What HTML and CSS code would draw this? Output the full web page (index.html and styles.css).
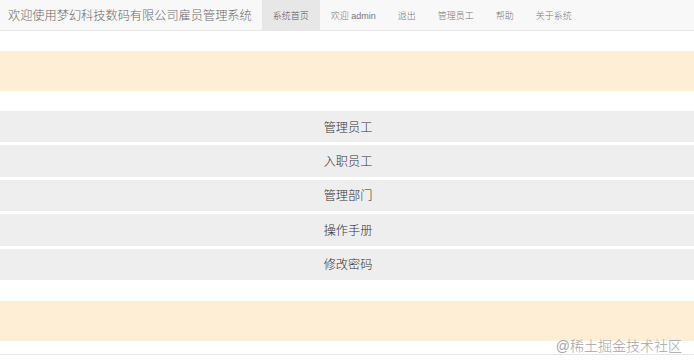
FILE: index.html
```html
<!DOCTYPE html>
<html lang="zh-CN">
<head>
    <meta charset="UTF-8">
    <meta name="viewport" content="width=device-width, initial-scale=1.0">
    <title>雇员管理系统</title>
    <link rel="stylesheet" href="styles.css">
</head>
<body>
    <nav class="navbar">
        <a class="brand" href="#">欢迎使用梦幻科技数码有限公司雇员管理系统</a>
        <ul class="nav">
            <li class="active"><a href="#">系统首页</a></li>
            <li><a href="#">欢迎 admin</a></li>
            <li><a href="#">退出</a></li>
            <li><a href="#">管理员工</a></li>
            <li><a href="#">帮助</a></li>
            <li><a href="#">关于系统</a></li>
        </ul>
    </nav>

    <div class="band"></div>

    <div class="menu">
        <a class="menu-item" href="#">管理员工</a>
        <a class="menu-item" href="#">入职员工</a>
        <a class="menu-item" href="#">管理部门</a>
        <a class="menu-item" href="#">操作手册</a>
        <a class="menu-item" href="#">修改密码</a>
    </div>

    <div class="band band-bottom"></div>

    <footer class="footer"></footer>

    <span class="watermark">@稀土掘金技术社区</span>
</body>
</html>
```

FILE: styles.css
```css
/* General */
body {
    font-family: 'Liberation Sans', 'Noto Sans CJK SC', sans-serif;
    background-color: #fff;
    color: #333;
    margin: 0;
    padding: 0;
    position: relative;
    min-height: 363px;
    overflow: hidden;
}

a {
    text-decoration: none;
}

/* Navbar */
.navbar {
    display: flex;
    align-items: stretch;
    height: 30px;
    background-color: #f8f8f8;
    border-bottom: 1px solid #e7e7e7;
}

.brand {
    display: flex;
    align-items: center;
    padding: 0 10px 0 8px;
    font-size: 12.2px;
    font-weight: 300;
    color: #6a6a6a;
}

.nav {
    display: flex;
    list-style: none;
    margin: 0;
    padding: 0;
}

.nav li a {
    display: flex;
    align-items: center;
    height: 100%;
    padding: 0 11px;
    font-size: 9px;
    font-weight: 300;
    color: #777;
}

.nav li.active a {
    background-color: #e7e7e7;
    color: #555;
}

/* Bandas */
.band {
    height: 40px;
    margin-top: 20px;
    background-color: #feeed5;
}

.band-bottom {
    margin-top: 21px;
}

/* Menu */
.menu {
    display: flex;
    flex-direction: column;
    gap: 3px;
    margin-top: 20px;
}

.menu-item {
    display: flex;
    align-items: center;
    justify-content: center;
    height: 31.4px;
    padding-left: 2px;
    background-color: #eee;
    color: #333;
    font-size: 12.2px;
    font-weight: 300;
}

/* Footer */
.footer {
    margin-top: 13px;
    border-top: 1px solid #e7e7e7;
    height: 10px;
}

.watermark {
    position: absolute;
    right: 12px;
    bottom: 10px;
    font-size: 14px;
    font-weight: 300;
    color: #a5a5a5;
}
```
